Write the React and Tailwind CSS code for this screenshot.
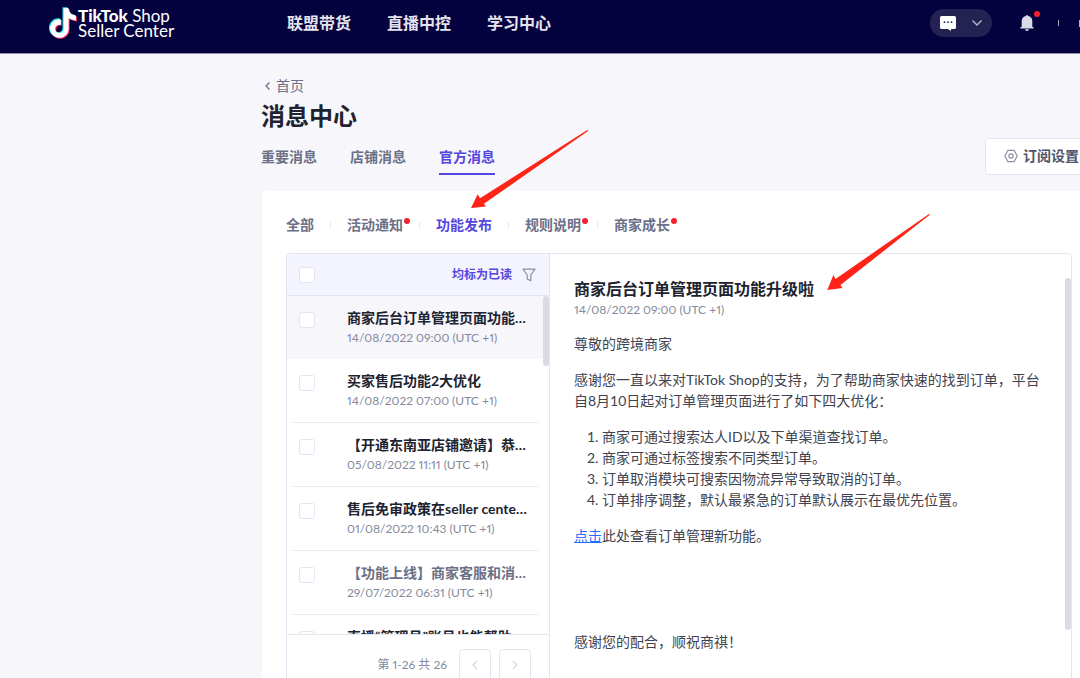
import React from "react";

const NOTE_PATH =
  "M12.525.02c1.31-.02 2.61-.01 3.91-.02.08 1.53.63 3.09 1.75 4.17 1.12 1.11 2.7 1.62 4.24 1.79v4.03c-1.44-.05-2.89-.35-4.2-.97-.57-.26-1.1-.59-1.62-.93-.01 2.92.01 5.84-.02 8.75-.08 1.4-.54 2.79-1.35 3.94-1.31 1.92-3.58 3.17-5.91 3.21-1.43.08-2.86-.31-4.08-1.03-2.02-1.19-3.44-3.37-3.65-5.71-.02-.5-.03-1-.01-1.49.18-1.9 1.12-3.72 2.58-4.96 1.66-1.44 3.98-2.13 6.15-1.72.02 1.48-.04 2.96-.04 4.44-.99-.32-2.15-.23-3.02.37-.63.41-1.11 1.04-1.36 1.75-.21.51-.15 1.07-.14 1.61.24 1.64 1.82 3.02 3.5 2.87 1.12-.01 2.19-.66 2.77-1.61.19-.33.4-.67.41-1.06.1-1.79.06-3.57.07-5.36.01-4.03-.01-8.05.02-12.07z";

const messages = [
  { title: "商家后台订单管理页面功能升级啦", date: "14/08/2022 09:00 (UTC +1)", selected: true },
  { title: "买家售后功能2大优化", date: "14/08/2022 07:00 (UTC +1)" },
  { title: "【开通东南亚店铺邀请】恭喜您获得资格", date: "05/08/2022 11:11 (UTC +1)" },
  { title: "售后免审政策在seller center上线", date: "01/08/2022 10:43 (UTC +1)" },
  { title: "【功能上线】商家客服和消息功能", date: "29/07/2022 06:31 (UTC +1)", read: true },
  { title: "直播“管理员”账号也能帮助" },
];

const filters = [
  { label: "全部" },
  { label: "活动通知", dot: true },
  { label: "功能发布", active: true },
  { label: "规则说明", dot: true },
  { label: "商家成长", dot: true },
];

function Logo() {
  return (
    <a href="#home" className="flex items-center text-white">
      <svg viewBox="0 0 25 26" className="h-[34px] w-[31px] shrink-0" aria-hidden="true">
        <path d={NOTE_PATH} fill="#25e8e4" transform="translate(0 .3)" />
        <path d={NOTE_PATH} fill="#fb2b55" transform="translate(1.7 1.7)" />
        <path d={NOTE_PATH} fill="#fff" transform="translate(.9 1)" />
      </svg>
      <span className="flex flex-col text-[17px] leading-[15px]">
        <span>
          <b className="font-black">TikTok</b> Shop
        </span>
        <span>Seller Center</span>
      </span>
    </a>
  );
}

function Header() {
  return (
    <header className="flex h-[54px] shrink-0 items-center border-b border-[#8f8eaa] bg-[#04023e] pb-[7px] pl-[47px]">
      <div className="w-60 shrink-0">
        <Logo />
      </div>
      <nav className="flex flex-1 gap-9 text-base font-bold leading-6 text-[#e4e4ee]">
        <a href="#alliance">联盟带货</a>
        <a href="#live">直播中控</a>
        <a href="#learn">学习中心</a>
      </nav>
      <button aria-label="聊天" className="flex h-7 w-[62px] items-center justify-between rounded-full bg-[#242253] pl-[10px] pr-[9px]">
        <svg viewBox="0 0 16 15" className="h-[15px] w-4" aria-hidden="true">
          <path d="M1.500 0h13A1.500 1.500 0 0 1 16 1.500v10a1.500 1.500 0 0 1-1.500 1.500H11V15L8 13H1.500A1.500 1.500 0 0 1 0 11.500v-10A1.500 1.500 0 0 1 1.500 0z" fill="#fff" />
          <circle cx="4.500" cy="6.200" r=".9" fill="#242253" />
          <circle cx="8" cy="6.200" r=".9" fill="#242253" />
          <circle cx="11.500" cy="6.200" r=".9" fill="#242253" />
        </svg>
        <svg viewBox="0 0 12 8" className="h-2 w-3" fill="none" stroke="#b9b8ca" strokeWidth="1.400" aria-hidden="true">
          <path d="M1.500 1.500 6 6l4.500-4.500" />
        </svg>
      </button>
      <button aria-label="通知" className="relative ml-7">
        <svg viewBox="0 0 14 16" className="h-4 w-[14px]" fill="#d9dae6" aria-hidden="true">
          <path d="M7 0a1 1 0 0 1 1 .9A5.200 5.200 0 0 1 12.300 6v6H13.500v1.600H.5V12h1.200V6A5.200 5.200 0 0 1 6 .9 1 1 0 0 1 7 0zM5 14.200h4a2 1.700 0 0 1-4 0z" />
        </svg>
        <span className="absolute -right-[6px] -top-1 h-[6px] w-[6px] rounded-full bg-[#f5222d]" />
      </button>
      <span className="ml-6 h-[6px] w-px bg-[#a8a7bd]" />
      <svg viewBox="0 0 1 24" className="ml-5 h-6 w-px" aria-hidden="true">
        <rect y="9" width="1" height="7" fill="#d9a4c4" />
      </svg>
    </header>
  );
}

function Check({ label }) {
  return (
    <input
      type="checkbox"
      aria-label={label}
      className="h-4 w-4 shrink-0 appearance-none rounded-[3px] border border-[#e3e5f1] bg-white"
    />
  );
}

function MessageRow({ message }) {
  return (
    <li className={message.selected ? "bg-[#f6f6fb]" : "pl-[5px] pr-[10px]"}>
      <div
        className={
          message.selected
            ? "flex h-[63px] items-start pl-3 pt-4"
            : "flex h-16 items-start border-b border-[#eceef5] pl-[7px] pt-4"
        }
      >
        <Check label={message.title} />
        <a href="#message" className="-mt-1 ml-8 block w-[184px]">
          <span
            className={
              message.read
                ? "block truncate text-sm font-bold leading-5 text-[#6b7086]"
                : "block truncate text-sm font-bold leading-5 text-[#20232f]"
            }
          >
            {message.title}
          </span>
          {message.date && (
            <time className="block text-xs leading-5 proportional-nums text-[#868a9e]">{message.date}</time>
          )}
        </a>
      </div>
    </li>
  );
}

function MessageList() {
  return (
    <section className="relative w-[263px] shrink-0 border-r border-[#e3e5f1]">
      <div className="flex h-[42px] items-center border-b border-[#e3e5f1] bg-[#f4f4fe] pl-3 pr-[13px]">
        <Check label="全选" />
        <button className="ml-auto text-xs font-bold text-[#5546e0]">均标为已读</button>
        <button aria-label="筛选" className="ml-[10px]">
          <svg viewBox="0 0 14 14" className="h-[14px] w-[14px]" fill="none" stroke="#8a8da3" strokeWidth="1.200" strokeLinejoin="round" aria-hidden="true">
            <path d="M1 1.200h12L8.800 7v5.800L5.200 11V7z" />
          </svg>
        </button>
      </div>
      <ul className="h-[338px] overflow-hidden">
        {messages.map((m) => (
          <MessageRow key={m.title} message={m} />
        ))}
      </ul>
      <span className="absolute right-0 top-[42px] h-[70px] w-[6px] rounded-full bg-[#d9dbe6]" />
      <div className="flex h-[60px] items-center justify-end gap-2 border-t border-[#e3e5f1] pr-[18px] text-xs proportional-nums text-[#868a9e]">
        <span className="mr-1">第 1-26 共 26</span>
        <button aria-label="上一页" className="flex h-8 w-8 items-center justify-center rounded border border-[#e3e5f1]">
          <svg viewBox="0 0 8 10" className="h-[10px] w-2" fill="none" stroke="#d5d7e4" strokeWidth="1.200" aria-hidden="true">
            <path d="M6 1 2 5l4 4" />
          </svg>
        </button>
        <button aria-label="下一页" className="flex h-8 w-8 items-center justify-center rounded border border-[#e3e5f1]">
          <svg viewBox="0 0 8 10" className="h-[10px] w-2" fill="none" stroke="#d5d7e4" strokeWidth="1.200" aria-hidden="true">
            <path d="m2 1 4 4-4 4" />
          </svg>
        </button>
      </div>
    </section>
  );
}

function Detail() {
  return (
    <article className="relative min-w-0 flex-1 px-6 pt-6 text-sm leading-[21px] text-[#40434f]">
      <h2 className="text-base font-bold leading-[22px] text-[#20232f]">商家后台订单管理页面功能升级啦</h2>
      <time className="block text-xs leading-5 proportional-nums text-[#868a9e]">14/08/2022 09:00 (UTC +1)</time>
      <p className="mt-[13px]">尊敬的跨境商家</p>
      <p className="mt-[15px]">
        感谢您一直以来对TikTok Shop的支持，为了帮助商家快速的找到订单，平台自8月10日起对订单管理页面进行了如下四大优化：
      </p>
      <ol className="mt-[15px] list-decimal pl-7">
        <li>商家可通过搜索达人ID以及下单渠道查找订单。</li>
        <li>商家可通过标签搜索不同类型订单。</li>
        <li>订单取消模块可搜索因物流异常导致取消的订单。</li>
        <li>订单排序调整，默认最紧急的订单默认展示在最优先位置。</li>
      </ol>
      <p className="mt-[15px]">
        <a href="#orders" className="text-[#1f6fff] underline">点击</a>此处查看订单管理新功能。
      </p>
      <p className="mt-[85px]">感谢您的配合，顺祝商祺！</p>
      <span className="absolute right-0 top-6 h-[352px] w-[6px] rounded-full bg-[#d9dbe6]" />
    </article>
  );
}

function Arrows() {
  return (
    <svg viewBox="0 0 1080 678" className="pointer-events-none absolute left-0 top-0 h-[678px] w-[1080px]" fill="#ff2318" aria-hidden="true">
      <path d="M587.700 129.800 480 198.200 477.700 194.300 471 208 485.900 206.400 484 203.700 588 131z" />
      <path d="M929.300 213.800 835.500 279 833.400 275 827.300 290 842.500 288 840.500 285 929.500 215z" />
    </svg>
  );
}

export default function App() {
  return (
    <div className="relative flex h-screen flex-col overflow-hidden bg-[#f6f6fb] font-['Lato','Noto_Sans_CJK_SC',sans-serif]">
      <Header />
      <main className="flex flex-1 flex-col pl-[261px] pt-[22px]">
        <a href="#home" className="flex items-center gap-1 pl-px text-sm leading-5 text-[#6b7086]">
          <svg viewBox="0 0 10 10" className="h-[10px] w-[10px]" fill="none" stroke="#6b7086" strokeWidth="1.300" aria-hidden="true">
            <path d="M7.500 1.500 4 5l3.500 3.500" />
          </svg>
          首页
        </a>
        <h1 className="mt-1 text-2xl font-bold leading-8 text-[#20232f]">消息中心</h1>
        <div className="flex h-[59px] items-start justify-between">
          <nav className="flex gap-[33px] pt-[15px] text-sm font-bold leading-5 text-[#6b7086]">
            <a href="#important">重要消息</a>
            <a href="#shop">店铺消息</a>
            <a href="#official" className="border-b-2 border-[#5546e0] pb-[6px] text-[#5546e0]">官方消息</a>
          </nav>
          <button className="-mr-4 mt-[6px] flex h-[37px] items-center gap-[5px] rounded border border-[#e3e5f1] bg-white pb-px pl-[18px] pr-4 text-sm font-bold text-[#50546a]">
            <svg viewBox="0 0 14 14" className="h-[14px] w-[14px]" fill="none" stroke="#8a8da3" strokeWidth="1.200" strokeLinejoin="round" aria-hidden="true">
              <path d="M4 1.300h6L13.200 7 10 12.700H4L.8 7z" />
              <circle cx="7" cy="7" r="2.100" />
            </svg>
            订阅设置
          </button>
        </div>
        <div className="ml-px flex-1 rounded-tl bg-white pl-6 pr-2 pt-6">
          <nav className="flex items-center gap-4 text-sm font-bold leading-5 text-[#6b7086]">
            {filters.map((f, i) => (
              <React.Fragment key={f.label}>
                {i > 0 && <span className="h-[6px] w-px bg-[#e3e5f1]" />}
                <a href="#filter" className={f.active ? "relative text-[#5546e0]" : "relative"}>
                  {f.label}
                  {f.dot && <span className="absolute -right-[7px] top-[3px] h-[6px] w-[6px] rounded-full bg-[#f5222d]" />}
                </a>
              </React.Fragment>
            ))}
          </nav>
          <div className="mt-[18px] flex overflow-hidden rounded border border-[#e3e5f1]">
            <MessageList />
            <Detail />
          </div>
        </div>
      </main>
      <Arrows />
    </div>
  );
}
